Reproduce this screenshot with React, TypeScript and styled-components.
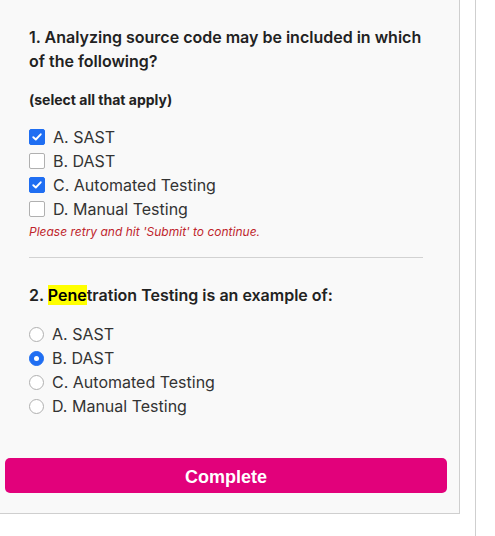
import React from "react";
import styled, { createGlobalStyle } from "styled-components";

const Global = createGlobalStyle`
  html, body { margin: 0; padding: 0; background: #ffffff; }
  body { font-family: Inter, "Liberation Sans", sans-serif; }
`;

const Page = styled.div`
  display: flex;
  align-items: flex-start;
  height: 536px;
  overflow: hidden;
`;

const Panel = styled.div`
  box-sizing: border-box;
  width: 460px;
  background: #f9f9f9;
  border-right: 1px solid #cfcfcf;
  border-bottom: 1px solid #cfcfcf;
  padding: 25px 0 20px 0;
  display: flex;
  flex-direction: column;
`;

const Rule = styled.div`
  margin-left: 15px;
  width: 1px;
  height: 536px;
  background: #cfcfcf;
`;

const Content = styled.div`
  margin-left: 29px;
  width: 394px;
  display: flex;
  flex-direction: column;
`;

const Title = styled.div`
  font-size: 16px;
  line-height: 24px;
  font-weight: 600;
  color: #222;
`;

const Hint = styled.div`
  margin-top: 18px;
  font-size: 14px;
  line-height: 18px;
  font-weight: 700;
  color: #222;
`;

const Options = styled.div<{ $top: number }>`
  margin-top: ${(p) => p.$top}px;
  display: flex;
  flex-direction: column;
`;

const Option = styled.label`
  display: flex;
  align-items: center;
  gap: 8px;
  height: 24px;
  font-size: 16px;
  color: #333;
`;

const Box = styled.span<{ $on: boolean }>`
  box-sizing: border-box;
  width: 16px;
  height: 16px;
  border-radius: 2px;
  display: flex;
  align-items: center;
  justify-content: center;
  background: ${(p) => (p.$on ? "#1f6ef2" : "#ffffff")};
  border: 1px solid ${(p) => (p.$on ? "#1f6ef2" : "#b0b0b0")};
`;

const Radio = styled.span<{ $on: boolean }>`
  box-sizing: border-box;
  width: 15px;
  height: 15px;
  border-radius: 50%;
  display: flex;
  align-items: center;
  justify-content: center;
  background: ${(p) => (p.$on ? "#1f6ef2" : "#ffffff")};
  border: 1px solid ${(p) => (p.$on ? "#1f6ef2" : "#b0b0b0")};
  &::after {
    content: "";
    display: ${(p) => (p.$on ? "block" : "none")};
    width: 5px;
    height: 5px;
    border-radius: 50%;
    background: #fff;
  }
`;

const ErrorText = styled.div`
  margin-top: 3px;
  font-size: 12px;
  line-height: 16px;
  font-style: italic;
  color: #c0262d;
`;

const Divider = styled.hr`
  margin: 17px 0 0 0;
  border: none;
  border-top: 1px solid #d2d2d2;
  height: 0;
  width: 394px;
`;

const Title2 = styled(Title)`
  margin-top: 25px;
`;

const Mark = styled.span`
  background: #ffff00;
  color: #000;
`;

const Button = styled.button`
  margin: 40px 0 0 5px;
  width: 442px;
  height: 35px;
  padding: 3px 0 0 0;
  border: none;
  border-radius: 5px;
  background: #e2017b;
  color: #fff;
  font-family: "Liberation Sans", Arial, sans-serif;
  font-weight: 700;
  font-size: 18px;
  cursor: pointer;
`;

const Check = () => (
  <svg width="10" height="8" viewBox="0 0 10 8">
    <path d="M1.3 4.2 L3.8 6.5 L8.7 1.3" fill="none" stroke="#fff" strokeWidth="1.9" strokeLinecap="round" strokeLinejoin="round" />
  </svg>
);

const q1 = [
  { t: "A. SAST", on: true },
  { t: "B. DAST", on: false },
  { t: "C. Automated Testing", on: true },
  { t: "D. Manual Testing", on: false },
];

const q2 = [
  { t: "A. SAST", on: false },
  { t: "B. DAST", on: true },
  { t: "C. Automated Testing", on: false },
  { t: "D. Manual Testing", on: false },
];

export default function App() {
  return (
    <>
      <Global />
      <Page>
        <Panel>
          <Content>
            <Title>1. Analyzing source code may be included in which of the following?</Title>
            <Hint>(select all that apply)</Hint>
            <Options $top={16}>
              {q1.map((o) => (
                <Option key={o.t}>
                  <Box $on={o.on}>{o.on && <Check />}</Box>
                  {o.t}
                </Option>
              ))}
            </Options>
            <ErrorText>Please retry and hit 'Submit' to continue.</ErrorText>
            <Divider />
            <Title2>
              2. <Mark>Pene</Mark>tration Testing is an example of:
            </Title2>
            <Options $top={15}>
              {q2.map((o) => (
                <Option key={o.t}>
                  <Radio $on={o.on} />
                  {o.t}
                </Option>
              ))}
            </Options>
          </Content>
          <Button>Complete</Button>
        </Panel>
        <Rule />
      </Page>
    </>
  );
}
